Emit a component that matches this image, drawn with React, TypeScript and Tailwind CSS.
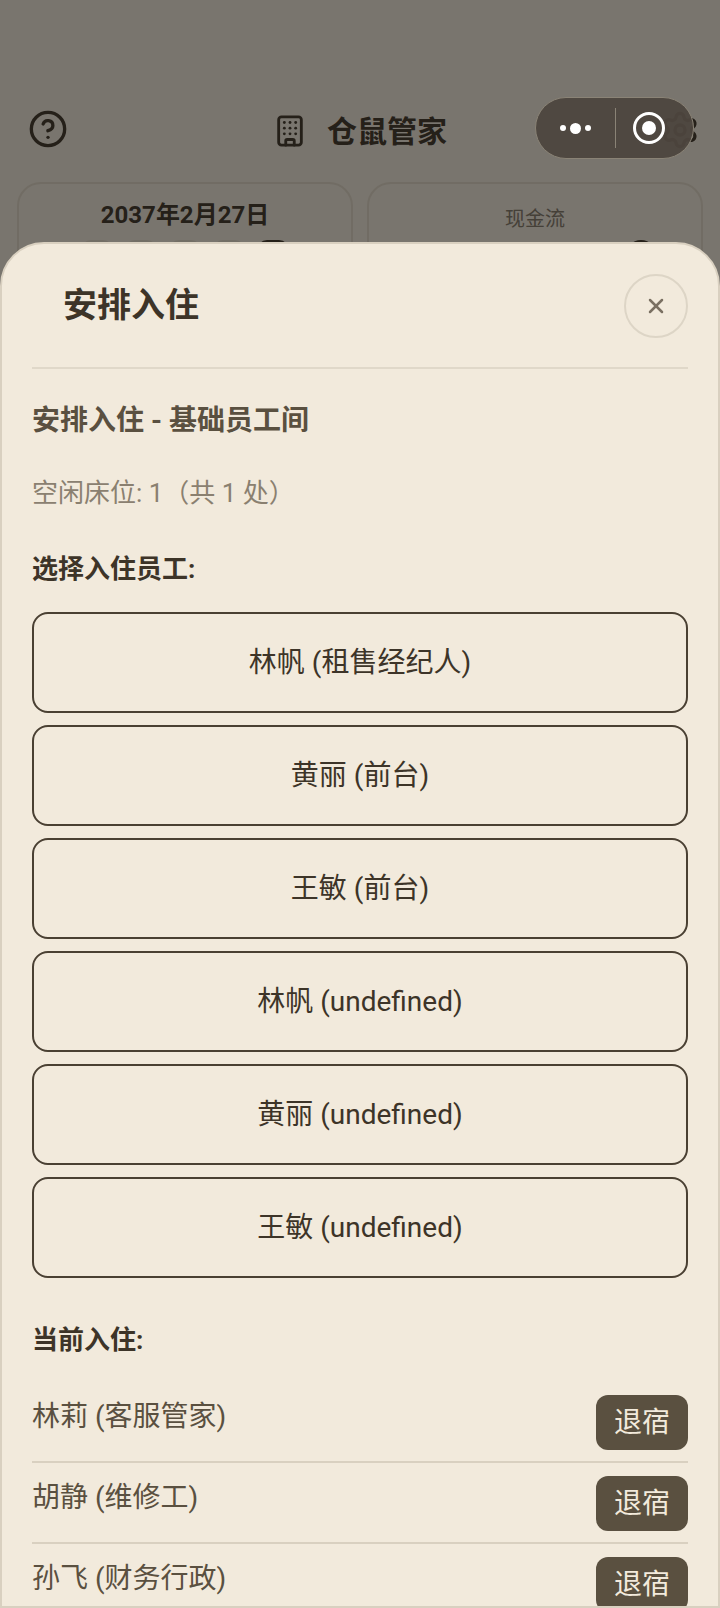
import { Building, CircleHelp, Settings, X } from "lucide-react";

const font = "font-['Roboto','Noto_Sans_CJK_SC',sans-serif]";

const staff = ["林帆 (租售经纪人)", "黄丽 (前台)", "王敏 (前台)", "林帆 (undefined)", "黄丽 (undefined)", "王敏 (undefined)"];
const current = ["林莉 (客服管家)", "胡静 (维修工)", "孙飞 (财务行政)"];

const Page = () => (
    <div className="h-full bg-[#f2eadc] text-[#4a4033]">
        <div className="h-[80px] bg-[#f2eadc]" />
        <div className="relative flex h-[102px] items-center justify-center">
            <CircleHelp className="absolute left-[28px] top-[29px] h-[40px] w-[40px]" strokeWidth={2} />
            <Building className="mr-[20px] h-[34px] w-[34px]" strokeWidth={2} />
            <span className="text-[30px] font-bold">仓鼠管家</span>
            <Settings className="absolute left-[660px] top-[30px] h-[40px] w-[40px]" strokeWidth={2} />
        </div>
        <div className="grid grid-cols-2 gap-[14px] px-[17px]">
            <div className="flex h-[120px] flex-col items-center rounded-[24px] border-2 border-[#e2d9c8] pt-[14px]">
                <span className="text-[24px] font-bold leading-[34px]">2037年2月27日</span>
                <div className="mt-[8px] flex gap-[12px]">
                    <span className="h-[32px] w-[32px] rounded-[10px] bg-[#e5dccb]" />
                    <span className="h-[32px] w-[32px] rounded-[10px] bg-[#e5dccb]" />
                    <span className="h-[32px] w-[32px] rounded-[10px] bg-[#e5dccb]" />
                    <span className="h-[32px] w-[32px] rounded-[10px] bg-[#e5dccb]" />
                    <span className="h-[32px] w-[32px] rounded-[10px] bg-[#4a4033]" />
                </div>
            </div>
            <div className="relative flex h-[120px] flex-col items-center rounded-[24px] border-2 border-[#e2d9c8] pt-[20px]">
                <span className="text-[20px] leading-[30px] text-[#8a8070]">现金流</span>
                <span className="absolute left-[256px] top-[56px] h-[32px] w-[32px] rounded-full bg-[#4a4033]" />
            </div>
        </div>
    </div>
);

const App = () => {
    return (
        <div className={`relative h-[1608px] w-[720px] overflow-hidden ${font}`}>
            <Page />
            <div className="absolute inset-0 bg-black/50" />
            {/* wechat capsule */}
            <div className="absolute left-[535px] top-[97px] flex h-[62px] w-[159px] items-center rounded-full border border-[#8a8376] bg-[#4d463e]/95">
                <div className="flex w-[79px] items-center justify-center gap-[4px]">
                    <span className="h-[6px] w-[6px] rounded-full bg-white" />
                    <span className="h-[11px] w-[11px] rounded-full bg-white" />
                    <span className="h-[6px] w-[6px] rounded-full bg-white" />
                </div>
                <div className="h-[40px] w-px bg-[#8a8376]" />
                <div className="flex flex-1 items-center justify-center pr-[12px]">
                    <div className="flex h-[32px] w-[32px] items-center justify-center rounded-full border-[3px] border-white">
                        <span className="h-[14px] w-[14px] rounded-full bg-white" />
                    </div>
                </div>
            </div>
            {/* bottom sheet */}
            <div className="absolute inset-x-0 bottom-0 top-[242px] overflow-hidden rounded-t-[44px] border-2 border-[#d9d0c0] bg-[#f2eadc] px-[30px]">
                <div className="flex h-[125px] items-center justify-between border-b-2 border-[#e0d8c9] pl-[31px]">
                    <h2 className="text-[34px] font-bold text-[#3d3428]">安排入住</h2>
                    <button className="flex h-[64px] w-[64px] items-center justify-center rounded-full border-2 border-[#ddd5c6] text-[#7a7062]">
                        <X className="h-[24px] w-[24px]" strokeWidth={2.5} />
                    </button>
                </div>
                <h3 className="mt-[32px] text-[28px] font-bold leading-[40px] text-[#5a5040]">安排入住 - 基础员工间</h3>
                <p className="mt-[34px] text-[26px] leading-[36px] text-[#8a8070]">空闲床位: 1（共 1 处）</p>
                <h4 className="mt-[40px] text-[26px] font-bold leading-[36px] text-[#3d3428]">选择入住员工:</h4>
                <div className="mt-[25px] flex flex-col gap-[12px]">
                    {staff.map((s, i) => (
                        <button key={i} className="h-[101px] rounded-[16px] border-2 border-[#4a4033] text-[28px] text-[#3d3428]">
                            {s}
                        </button>
                    ))}
                </div>
                <h4 className="mt-[44px] text-[26px] font-bold leading-[36px] text-[#3d3428]">当前入住:</h4>
                <div className="mt-[37px]">
                    {current.map((c, i) => (
                        <div key={i} className="mb-[13px] flex items-start justify-between border-b-2 border-[#d9d0c0] pb-[11px]">
                            <span className="text-[28px] leading-[44px] text-[#5a5040]">{c}</span>
                            <button className="h-[55px] w-[92px] rounded-[12px] bg-[#5a5040] text-[28px] text-[#f2eadc]">退宿</button>
                        </div>
                    ))}
                </div>
            </div>
        </div>
    );
};

export default App;
